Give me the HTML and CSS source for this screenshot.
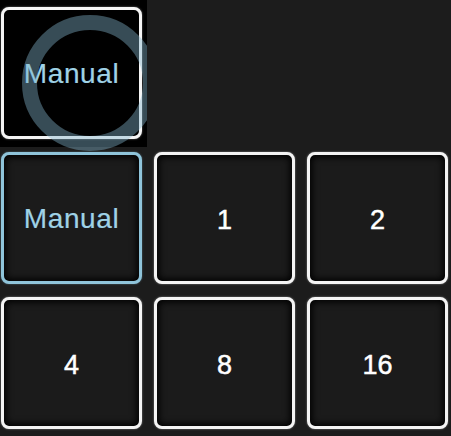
FILE: index.html
```html
<!DOCTYPE html>
<html lang="en">
<head>
  <meta charset="UTF-8">
  <title>Exposure Mode</title>
  <link rel="stylesheet" href="styles.css">
</head>
<body>
  <div class="preview">
    <div class="tile tile-active">
      <span class="label">Manual</span>
    </div>
    <div class="ring"></div>
  </div>

  <div class="grid">
    <div class="tile tile-selected"><span class="label">Manual</span></div>
    <div class="tile"><span class="num">1</span></div>
    <div class="tile"><span class="num">2</span></div>
    <div class="tile"><span class="num">4</span></div>
    <div class="tile"><span class="num">8</span></div>
    <div class="tile"><span class="num">16</span></div>
  </div>
</body>
</html>
```

FILE: styles.css
```css
* {
  box-sizing: border-box;
}

body {
  margin: 0;
  background-color: #1c1c1c;
  font-family: 'Liberation Sans', Arial, Helvetica, sans-serif;
  width: 451px;
  height: 436px;
  overflow: hidden;
}

.preview {
  position: relative;
  width: 147px;
  height: 147px;
  background: #000;
  padding: 7px 0 0 1px;
  overflow-x: clip;
  overflow-y: visible;
}

.ring {
  position: absolute;
  left: 22px;
  top: 15px;
  width: 136px;
  height: 136px;
  border-radius: 50%;
  border: 15px solid rgba(130, 180, 205, 0.42);
  pointer-events: none;
}

.grid {
  display: grid;
  grid-template-columns: repeat(3, 141px);
  grid-auto-rows: 132px;
  column-gap: 12px;
  row-gap: 13px;
  margin-top: 5px;
  padding-left: 1px;
}

.tile {
  width: 141px;
  height: 132px;
  display: flex;
  align-items: center;
  justify-content: center;
  background: #1b1b1b;
  border: 3px solid #f4f4f4;
  border-radius: 8px;
  box-shadow: inset 0 0 7px 2px #000, 0 0 2px rgba(255, 255, 255, 0.5);
}

.tile-active {
  background: #000;
}

.tile-selected {
  border-color: #8fc4da;
  box-shadow: inset 0 0 7px 2px #000, 0 0 2px rgba(143, 196, 218, 0.5);
}

.label {
  color: #9fd2e6;
  font-size: 28px;
  letter-spacing: 0.6px;
  margin-top: 2px;
  -webkit-text-stroke: 0.2px #9fd2e6;
}

.num {
  color: #fff;
  font-size: 27px;
  margin-top: 4px;
  -webkit-text-stroke: 0.5px #fff;
}
```
